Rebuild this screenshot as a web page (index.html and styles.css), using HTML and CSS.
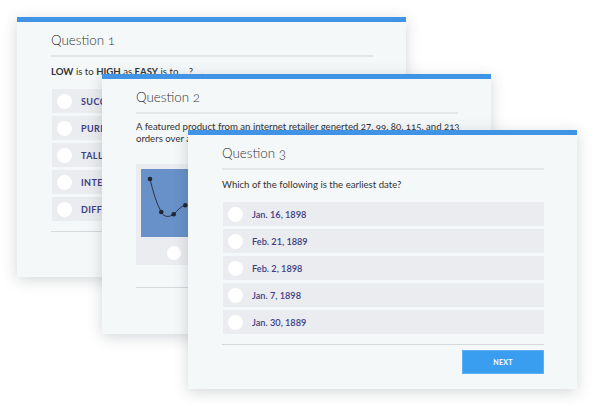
FILE: index.html
```html
<!DOCTYPE html>
<html>
<head>
<meta charset="utf-8">
<link rel="stylesheet" href="styles.css">
</head>
<body>
<div class="stage">
  <section class="card card-1">
    <h2 class="title">Question 1</h2>
    <p class="prompt"><b>LOW</b> is to <b>HIGH</b> as <b>EASY</b> is to <span class="blank">?</span>.</p>
    <ul class="options caps">
      <li><span class="radio"></span>SUCCESSFUL</li>
      <li><span class="radio"></span>PURE</li>
      <li><span class="radio"></span>TALL</li>
      <li><span class="radio"></span>INTENSE</li>
      <li><span class="radio"></span>DIFFICULT</li>
    </ul>
    <div class="footer"><button class="next">NEXT</button></div>
  </section>

  <section class="card card-2">
    <h2 class="title">Question 2</h2>
    <p class="prompt two-line">A featured product from an internet retailer generted 27, 99, 80, 115, and 213<br>orders over a period of five days. Which graph shows the data?</p>
    <div class="charts">
      <div class="chart-opt">
        <svg class="chart" viewBox="0 0 65 68" width="65" height="68">
          <rect width="65" height="68" fill="#6791c8"/>
          <path d="M9 10 C12 22 15 34 20.3 43 C23 49 29 48 32.7 45.3 C36 42 40 37 44.3 36.3" fill="none" stroke="#2f3440" stroke-width="1"/>
          <circle cx="9" cy="10" r="2.3" fill="#23262e"/>
          <circle cx="20.3" cy="43" r="2.3" fill="#23262e"/>
          <circle cx="32.7" cy="45.3" r="2.3" fill="#23262e"/>
          <circle cx="44.3" cy="36.3" r="2.3" fill="#23262e"/>
        </svg>
        <span class="radio"></span>
      </div>
      <div class="chart-opt">
        <svg class="chart" viewBox="0 0 65 68" width="65" height="68">
          <rect width="65" height="68" fill="#6791c8"/>
        </svg>
        <span class="radio"></span>
      </div>
      <div class="chart-opt">
        <svg class="chart" viewBox="0 0 65 68" width="65" height="68">
          <rect width="65" height="68" fill="#6791c8"/>
        </svg>
        <span class="radio"></span>
      </div>
      <div class="chart-opt">
        <svg class="chart" viewBox="0 0 65 68" width="65" height="68">
          <rect width="65" height="68" fill="#6791c8"/>
        </svg>
        <span class="radio"></span>
      </div>
    </div>
    <div class="footer"><button class="next">NEXT</button></div>
  </section>

  <section class="card card-3">
    <h2 class="title">Question 3</h2>
    <p class="prompt">Which of the following is the earliest date?</p>
    <ul class="options">
      <li><span class="radio"></span>Jan. 16, 1898</li>
      <li><span class="radio"></span>Feb. 21, 1889</li>
      <li><span class="radio"></span>Feb. 2, 1898</li>
      <li><span class="radio"></span>Jan. 7, 1898</li>
      <li><span class="radio"></span>Jan. 30, 1889</li>
    </ul>
    <div class="footer"><button class="next">NEXT</button></div>
  </section>
</div>
</body>
</html>
```

FILE: styles.css
```css
html, body {
  margin: 0;
  padding: 0;
  background: #ffffff;
}

body {
  font-family: Lato, "Open Sans", "Noto Sans", sans-serif;
  color: #333333;
  overflow: hidden;
}

.stage {
  display: grid;
  width: 594px;
  height: 406px;
}

.card {
  grid-area: 1 / 1;
  align-self: start;
  justify-self: start;
  box-sizing: border-box;
  width: 389px;
  height: 260px;
  background: #f5f8f9;
  border-top: 5px solid #4193e6;
  box-shadow: 0 3px 14px rgba(40, 50, 60, 0.2);
  padding: 10px 33px 0 34px;
  display: flex;
  flex-direction: column;
  overflow: hidden;
}

.card-1 { margin: 17px 0 0 17px; }
.card-2 { margin: 74px 0 0 102px; }
.card-3 { margin: 130px 0 0 188px; height: 259px; }

.title {
  margin: 0;
  font-size: 13.4px;
  line-height: 16px;
  font-weight: 300;
  color: #333;
  font-variant-numeric: oldstyle-nums;
  padding-bottom: 7px;
  border-bottom: 2px solid #e4e6e9;
}

.prompt {
  margin: 9px 0 0 0;
  font-size: 9.6px;
  line-height: 12px;
  font-weight: 400;
  color: #333;
  height: 12px;
  white-space: nowrap;
}

.prompt b { font-weight: 700; }

.blank {
  display: inline-block;
  width: 20px;
  text-align: center;
}

.two-line {
  height: 24px;
  margin-top: 7px;
  font-variant-numeric: oldstyle-nums;
}

.options {
  list-style: none;
  margin: 11px 0 0 1px;
  padding: 0;
  display: flex;
  flex-direction: column;
  gap: 3px;
}

.options li {
  height: 24px;
  background: #ebecef;
  display: flex;
  align-items: center;
  font-size: 9.2px;
  font-weight: 700;
  color: #3c3d86;
  white-space: nowrap;
}

.card-3 .options li { font-weight: 600; }

.caps li { letter-spacing: 0.4px; font-size: 9px; }

.radio {
  width: 15px;
  height: 15px;
  border-radius: 50%;
  background: #ffffff;
  margin: 0 9px 0 5px;
  flex: none;
}

.charts {
  margin-top: 19px;
  display: flex;
  gap: 6px;
  height: 101px;
}

.chart-opt {
  width: 75px;
  box-sizing: border-box;
  background: #ebecef;
  padding: 5px 5px 0 5px;
  display: flex;
  flex-direction: column;
  align-items: center;
  flex: none;
}

.chart {
  display: block;
}

.chart-opt .radio {
  margin: 9px 0 0 0;
  width: 14px;
  height: 14px;
}

.footer {
  margin-top: 10px;
  border-top: 1px solid #d5d8dc;
  padding-top: 5px;
  display: flex;
  justify-content: flex-end;
}

.card-2 .footer { margin-top: 22px; }

.next {
  width: 82px;
  height: 24px;
  background: #3a9ef0;
  border: 1px solid #5fb0f3;
  color: #ffffff;
  font-family: Lato, "Open Sans", sans-serif;
  font-size: 7px;
  font-weight: 700;
  letter-spacing: 0.3px;
  padding: 0;
}
```
